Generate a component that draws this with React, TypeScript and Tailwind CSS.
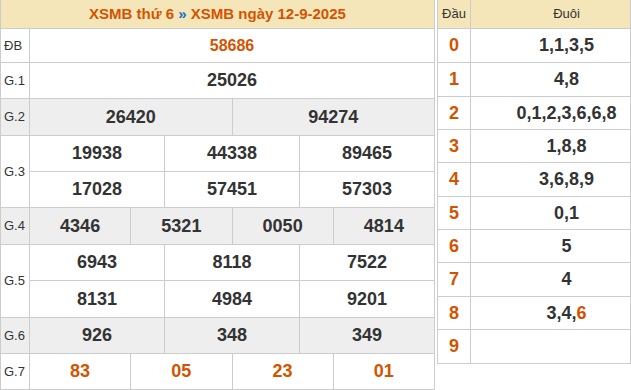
import React from "react";

const F = { fontFamily: '"Liberation Sans", Arial, sans-serif' };

function Num({ v, orange = false, big = true }: { v: string; orange?: boolean; big?: boolean }) {
  return (
    <span
      className={`${big ? "text-[18px]" : "text-[16px]"} font-bold ${orange ? "text-[#d35400]" : "text-[#333333]"}`}
    >
      {v}
    </span>
  );
}

function Cells({
  vals,
  orange = false,
  big = true,
  h,
}: {
  vals: string[];
  orange?: boolean;
  big?: boolean;
  h: string;
}) {
  return (
    <div className={`flex w-full shrink-0 ${h}`}>
      {vals.map((v, i) => (
        <div
          key={i}
          className={`flex flex-1 items-center justify-center ${i > 0 ? "border-l border-[#cccccc]" : ""}`}
        >
          <Num v={v} orange={orange} big={big} />
        </div>
      ))}
    </div>
  );
}

function Row({
  label,
  gray = false,
  children,
}: {
  label: string;
  gray?: boolean;
  children: React.ReactNode;
}) {
  return (
    <div className={`flex border-t border-[#cccccc] ${gray ? "bg-[#eeeeee]" : "bg-white"}`}>
      <div className="flex w-[29px] shrink-0 items-center border-r border-[#cccccc] pl-[3px] text-[13px] text-[#333333]">
        {label}
      </div>
      <div className="flex flex-1 flex-col">{children}</div>
    </div>
  );
}

const loto: [string, React.ReactNode][] = [
  ["0", "1,1,3,5"],
  ["1", "4,8"],
  ["2", "0,1,2,3,6,6,8"],
  ["3", "1,8,8"],
  ["4", "3,6,8,9"],
  ["5", "0,1"],
  ["6", "5"],
  ["7", "4"],
  [
    "8",
    <>
      3,4,<span className="text-[#d35400]">6</span>
    </>,
  ],
  ["9", ""],
];
const rh = ["h-[34px]", "h-[34px]", "h-[33px]", "h-[33px]", "h-[34px]", "h-[33px]", "h-[33px]", "h-[34px]", "h-[33px]", "h-[34px]"];

export default function App() {
  return (
    <div style={F} className="flex h-[390px] w-[631px] items-start gap-[2px] bg-white">
      <div className="w-[435px] border-x border-b border-[#cccccc]">
        <div className="flex h-[28px] items-center justify-center bg-[#f5e6b9] text-[15px] font-bold text-[#d35400]">
          XSMB thứ 6&nbsp;<span className="text-[#1a6fc4]">»</span>&nbsp;XSMB ngày 12-9-2025
        </div>
        <Row label="ĐB">
          <Cells vals={["58686"]} orange big={false} h="h-[33px]" />
        </Row>
        <Row label="G.1">
          <Cells vals={["25026"]} h="h-[35px]" />
        </Row>
        <Row label="G.2" gray>
          <Cells vals={["26420", "94274"]} h="h-[36px]" />
        </Row>
        <Row label="G.3">
          <Cells vals={["19938", "44338", "89465"]} h="h-[35px]" />
          <div className="border-t border-[#cccccc]">
            <Cells vals={["17028", "57451", "57303"]} h="h-[35px]" />
          </div>
        </Row>
        <Row label="G.4" gray>
          <Cells vals={["4346", "5321", "0050", "4814"]} h="h-[36px]" />
        </Row>
        <Row label="G.5">
          <Cells vals={["6943", "8118", "7522"]} h="h-[35px]" />
          <div className="border-t border-[#cccccc]">
            <Cells vals={["8131", "4984", "9201"]} h="h-[36px]" />
          </div>
        </Row>
        <Row label="G.6" gray>
          <Cells vals={["926", "348", "349"]} h="h-[35px]" />
        </Row>
        <Row label="G.7">
          <Cells vals={["83", "05", "23", "01"]} orange h="h-[35px]" />
        </Row>
      </div>
      <div className="w-[194px] border-x border-b border-[#cccccc]">
        <div className="flex h-[28px] bg-[#f5e6b9] text-[13px] text-[#333333]">
          <div className="flex w-[33px] items-center justify-center border-r border-[#cccccc]">Đầu</div>
          <div className="flex flex-1 items-center justify-center pl-[32px]">Đuôi</div>
        </div>
        {loto.map(([d, t], i) => (
          <div key={d} className={`flex border-t border-[#cccccc] ${rh[i]}`}>
            <div className="flex w-[33px] items-center justify-center border-r border-[#cccccc] text-[18px] font-bold text-[#d35400]">
              {d}
            </div>
            <div className="flex flex-1 items-center justify-center pl-[32px] text-[18px] font-bold text-[#333333]">
              {t}
            </div>
          </div>
        ))}
      </div>
    </div>
  );
}
